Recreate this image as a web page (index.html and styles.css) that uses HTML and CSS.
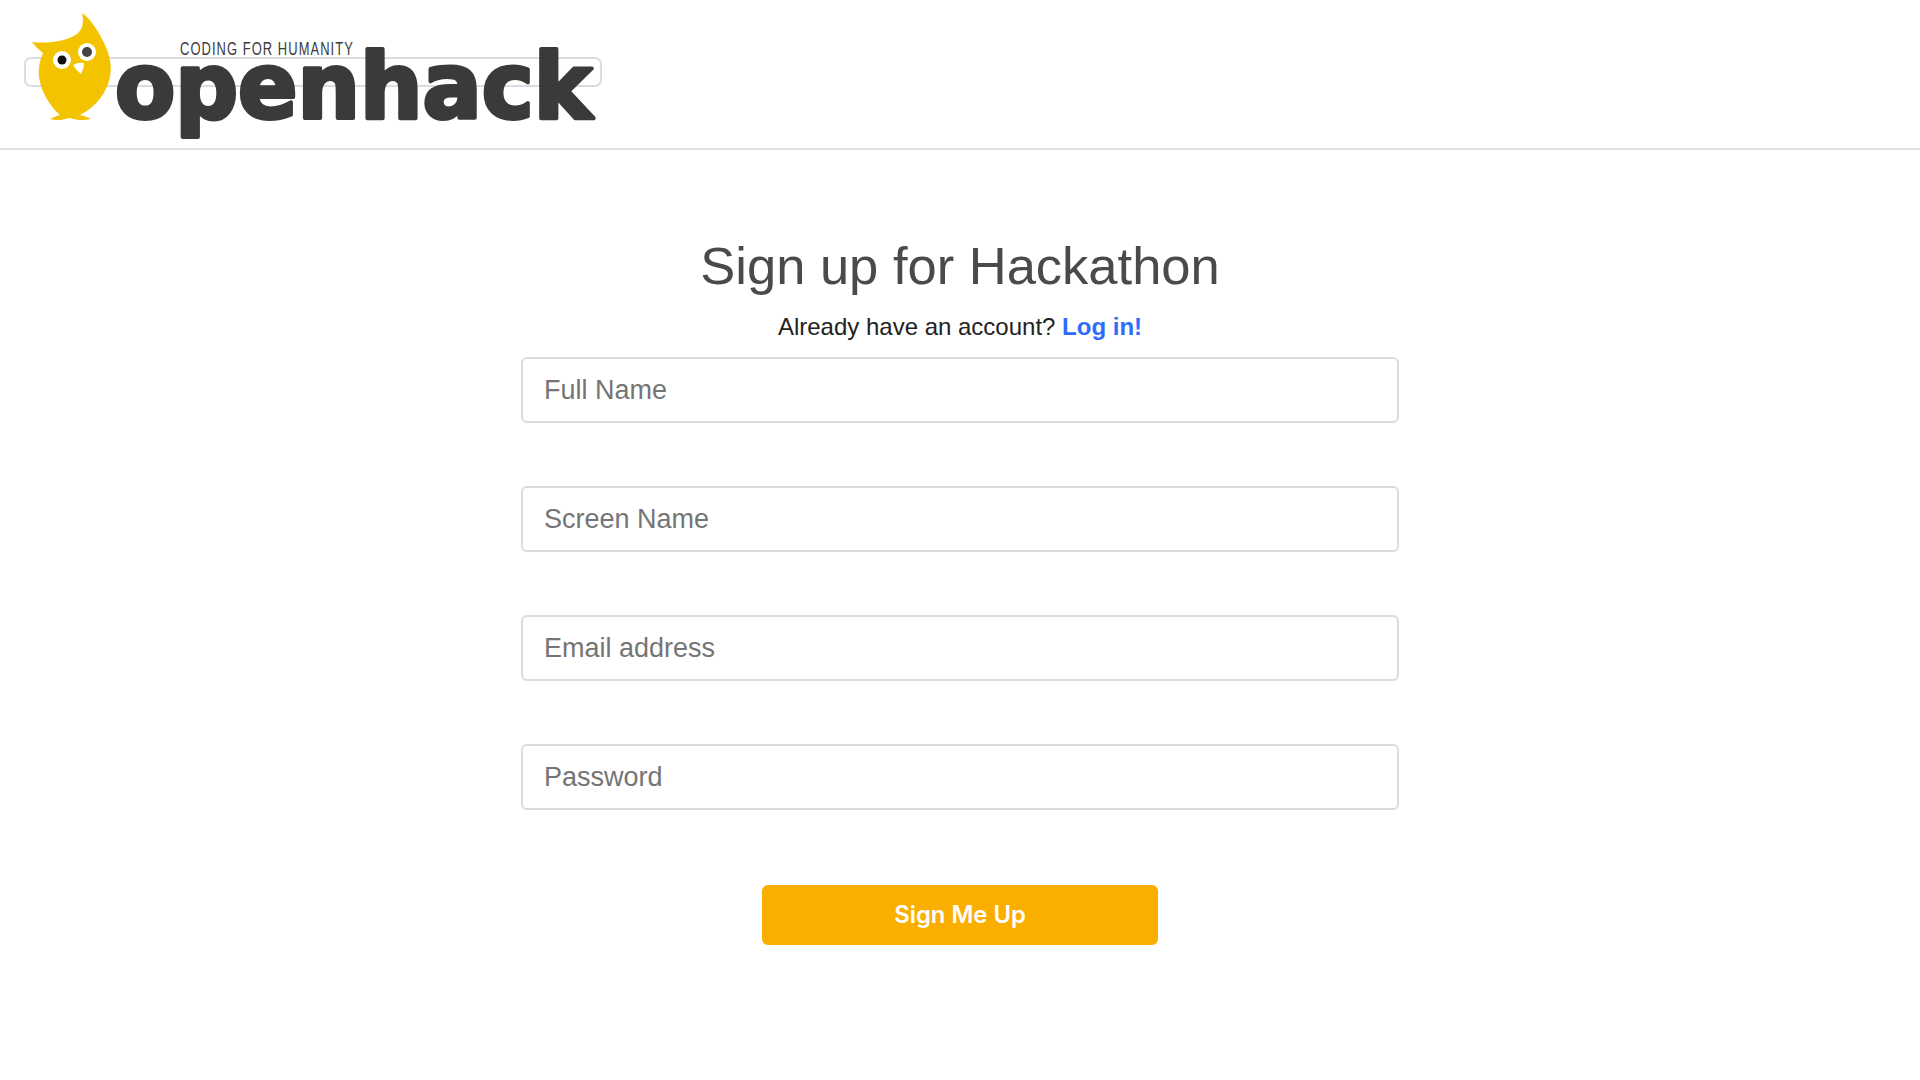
FILE: index.html
```html
<!DOCTYPE html>
<html lang="en">
  <head>
    <meta charset="UTF-8" />
    <meta name="viewport" content="width=device-width, initial-scale=1.0" />
    <title>Openhack | Sign up</title>
    <link rel="stylesheet" href="styles.css">
  </head>
  <body>
    <header class="site-header">
      <a href="#" class="logo-link">
        <svg class="logo" viewBox="0 0 620 149" width="620" height="149" role="img" aria-label="openhack">
          <rect x="25" y="58" width="576" height="28" rx="6" fill="none" stroke="#d9dde3" stroke-width="2" />
          <path fill="#f4c300" d="M82 13 C91 19 99 32 105 45 C110 56 112 66 110 77 C107 92 97 106 80 115 C84 116 88 117 91 119 C84 121 76 120 69 118 C63 120 56 121 50 119 C53 117 57 116 60 115 C50 106 41 92 39 77 C38 68 40 60 43 53 C39 50 35 46 32 42 C50 44 66 41 77 34 C83 29 84 22 82 13 Z" />
          <circle cx="62" cy="60" r="9" fill="#fff" />
          <circle cx="62" cy="60" r="4.5" fill="#111" />
          <circle cx="87" cy="52" r="9" fill="#fff" />
          <circle cx="87" cy="52" r="5" fill="#444" />
          <path fill="#fff" d="M73 65 Q78 62 84 63 Q84 69 81 74 Q76 70 73 65 Z" />
          <text class="logo-tagline" transform="translate(180 55) scale(.72 1)" textLength="240" lengthAdjust="spacing">CODING FOR HUMANITY</text>
          <text class="logo-word" x="115" y="118" textLength="477" lengthAdjust="spacingAndGlyphs">openhack</text>
        </svg>
      </a>
    </header>

    <main class="signup">
      <h1 class="signup-title">Sign up for Hackathon</h1>
      <p class="signup-sub">Already have an account? <a href="#">Log in!</a></p>
      <form class="signup-form">
        <input class="field" type="text" placeholder="Full Name" />
        <input class="field" type="text" placeholder="Screen Name" />
        <input class="field" type="email" placeholder="Email address" />
        <input class="field" type="password" placeholder="Password" />
        <button class="signup-btn" type="button">Sign Me Up</button>
      </form>
    </main>
  </body>
</html>
```

FILE: styles.css
```css
html,
body {
  margin: 0;
  padding: 0;
}

body {
  font-family: "Liberation Sans", Arial, sans-serif;
  color: #222;
  background: #fff;
}

.site-header {
  height: 148px;
  border-bottom: 2px solid #dcdfe3;
}

.logo-link {
  display: block;
  width: 620px;
}

.logo {
  display: block;
}

.logo-tagline {
  font-family: "Liberation Sans", sans-serif;
  font-size: 18px;
  fill: #3a3a3a;
}

.logo-word {
  font-family: "DejaVu Sans", sans-serif;
  font-size: 90px;
  font-weight: 700;
  fill: #3a3a39;
  stroke: #3a3a39;
  stroke-width: 4px;
  stroke-linejoin: round;
}

.signup {
  display: flex;
  flex-direction: column;
  align-items: center;
  padding-top: 86px;
}

.signup-title {
  margin: 0;
  font-size: 52.5px;
  font-weight: 400;
  line-height: 60px;
  color: #4a4a4a;
}

.signup-sub {
  margin: 13px 0 0;
  font-size: 24px;
  line-height: 36px;
}

.signup-sub a {
  color: #2f6bff;
  font-weight: 700;
  text-decoration: none;
}

.signup-form {
  display: flex;
  flex-direction: column;
  align-items: center;
  gap: 63px;
  width: 878px;
  margin-top: 12px;
}

.field {
  box-sizing: border-box;
  width: 100%;
  height: 66px;
  padding: 0 21px;
  border: 2px solid #dbdbdb;
  border-radius: 6px;
  font-family: inherit;
  font-size: 27px;
  color: #363636;
  outline: none;
}

.field::placeholder {
  color: #757575;
  opacity: 1;
}

.signup-btn {
  width: 396px;
  height: 60px;
  margin-top: 12px;
  padding: 0 0 2px;
  border: 0;
  border-radius: 6px;
  background: #faae00;
  color: #fff;
  font-family: Inter, sans-serif;
  font-size: 23.8px;
  font-weight: 600;
}
```
